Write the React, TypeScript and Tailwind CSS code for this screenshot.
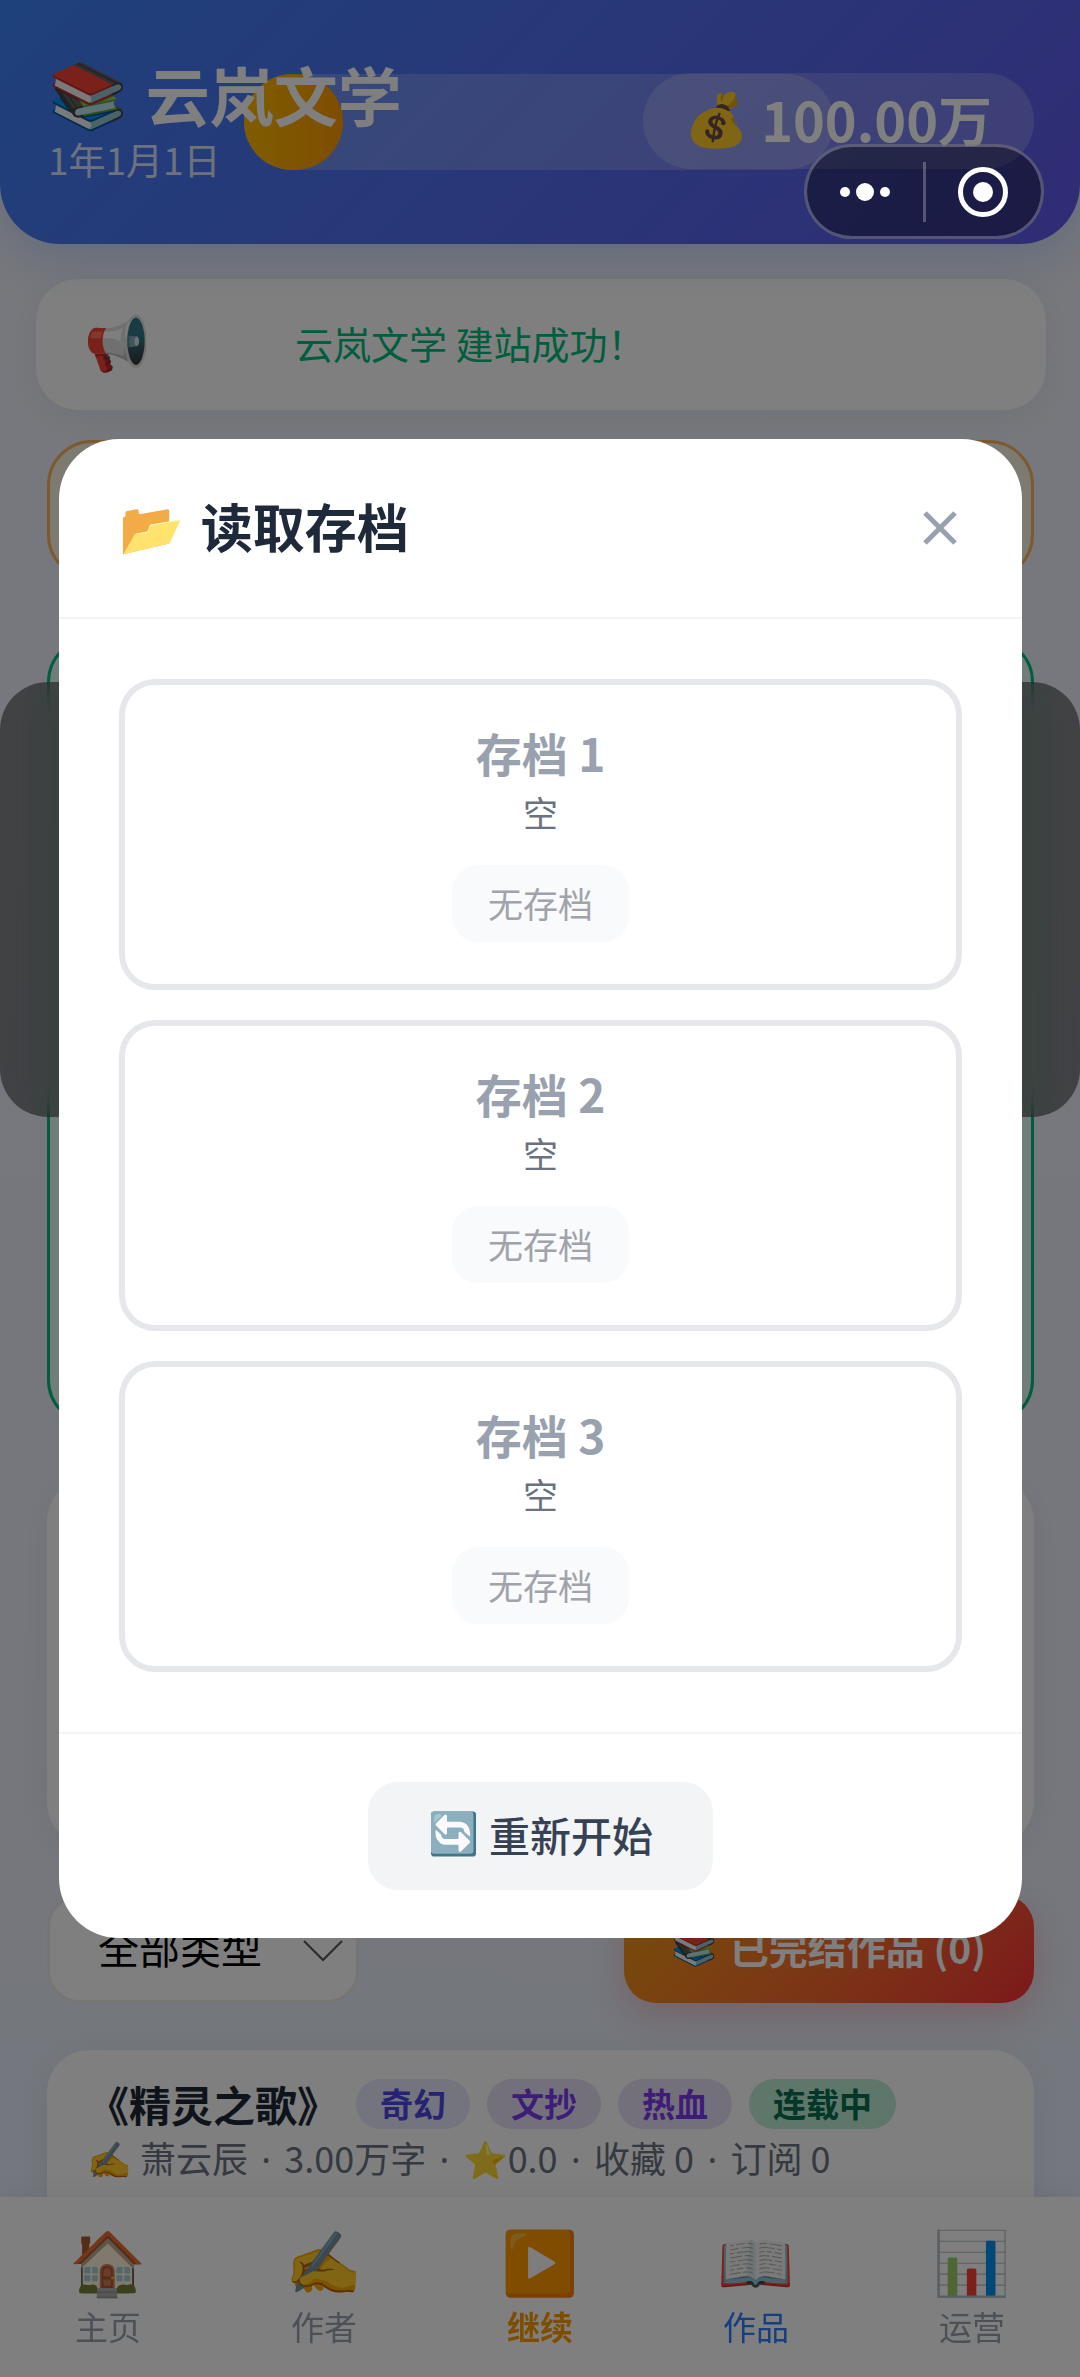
import { useState } from 'react'
import { X } from 'lucide-react'

interface SaveSlot {
  id: number
  summary: string | null
}

const SLOTS: SaveSlot[] = [
  { id: 1, summary: null },
  { id: 2, summary: null },
  { id: 3, summary: null },
]

const TAGS: { label: string; style: string }[] = [
  { label: '奇幻', style: 'bg-[#e6e9fc] text-[#4f46e5]' },
  { label: '文抄', style: 'bg-[#e6e0f8] text-[#7c3aed]' },
  { label: '热血', style: 'bg-[#e6e0f8] text-[#7c3aed]' },
  { label: '连载中', style: 'bg-[#bfecd5] text-[#066e4f]' },
]

const BOOK_STATS = ['萧云辰', '3.00万字', '⭐0.0', '收藏 0', '订阅 0']

const NAV_ITEMS: { icon: string; label: string; style: string }[] = [
  { icon: '🏠', label: '主页', style: 'text-gray-400' },
  { icon: '✍️', label: '作者', style: 'text-gray-400' },
  { icon: '▶️', label: '继续', style: 'font-bold text-amber-500' },
  { icon: '📖', label: '作品', style: 'text-blue-500' },
  { icon: '📊', label: '运营', style: 'text-gray-400' },
]

function Header() {
  return (
    <header className="relative flex items-start justify-between rounded-b-[60px] bg-linear-135 from-[#3b82f6] to-[#6058ea] pt-14 pr-[46px] pb-[60px] pl-12 text-white shadow-[0_12px_48px_rgba(59,130,246,0.25)]">
      <div className="absolute top-[74px] left-[244px] h-24 w-[590px] rounded-full bg-white/20">
        <div className="h-24 w-[99px] rounded-full bg-linear-to-r from-amber-400 to-amber-500" />
      </div>
      <div className="relative">
        <h1 className="flex items-center gap-[18px] text-[64px] leading-[74px] font-bold">
          <span className="pt-1 font-['Noto_Color_Emoji']">📚</span>
          <span className="pb-1">云岚文学</span>
        </h1>
        <p className="text-[37px] leading-[50px] opacity-80">1年1月1日</p>
      </div>
      <div className="relative mt-[17px] flex h-24 items-center gap-3 rounded-full bg-white/20 pr-[42px] pl-[41px] text-[54px] leading-[92px] font-bold">
        <span className="font-['Noto_Color_Emoji'] text-[52px]">💰</span>
        <span className="-mt-1">100.00万</span>
      </div>
    </header>
  )
}

function Capsule() {
  return (
    <div className="fixed top-36 right-9 z-50 flex h-[95px] w-60 items-center rounded-full border-[3px] border-white/25 bg-black/40">
      <button aria-label="更多" className="flex flex-1 items-center justify-center gap-1.5">
        <span className="size-2.5 rounded-full bg-white" />
        <span className="size-[18px] rounded-full bg-white" />
        <span className="size-2.5 rounded-full bg-white" />
      </button>
      <span className="h-[60px] w-[3px] bg-white/25" />
      <button aria-label="关闭小程序" className="flex flex-1 items-center justify-center">
        <span className="flex size-[50px] items-center justify-center rounded-full border-[5px] border-white">
          <span className="size-5 rounded-full bg-white" />
        </span>
      </button>
    </div>
  )
}

function FilterRow() {
  return (
    <div className="mt-12 flex items-center justify-between">
      <label className="relative">
        <select
          aria-label="作品类型"
          className="h-[108px] w-[312px] appearance-none rounded-[32px] border-[3px] border-[#efebe8] bg-white pb-1 pl-12 text-[41px] text-black"
        >
          <option>全部类型</option>
        </select>
        <svg viewBox="0 0 40 24" className="pointer-events-none absolute top-[45px] right-4 h-6 w-10" fill="none">
          <path d="M1 1 L20 20 L39 1" stroke="#555" strokeWidth="2" />
        </svg>
      </label>
      <button className="flex h-[108px] items-center gap-3 rounded-[32px] bg-linear-135 from-[#ee9a0b] to-red-500 px-12 pb-1 text-[39px] font-bold whitespace-nowrap text-white shadow-[0_12px_36px_rgba(239,68,68,0.25)]">
        <span className="font-['Noto_Color_Emoji'] text-[37px]">📚</span>
        已完结作品 (0)
      </button>
    </div>
  )
}

function BookCard() {
  return (
    <article className="mt-[47px] h-[400px] rounded-[42px] bg-white px-10 pt-[29px] shadow-[0_6px_36px_rgba(0,0,0,0.06)]">
      <div className="flex items-center gap-[17px]">
        <h2 className="text-[42px] leading-[48px] font-bold text-gray-800">《精灵之歌》</h2>
        {TAGS.map(tag => (
          <span
            key={tag.label}
            className={`rounded-full px-6 pb-0.5 text-[33px] leading-[48px] font-bold ${tag.style}`}
          >
            {tag.label}
          </span>
        ))}
      </div>
      <p className="text-[36px] leading-[56px] text-gray-500">
        <span className="font-['Noto_Color_Emoji']">✍️</span>{' '}
        {BOOK_STATS.map((stat, index) => (
          <span key={stat}>
            {index > 0 && <span className="mx-1 font-['Noto_Sans']"> · </span>}
            {stat}
          </span>
        ))}
      </p>
    </article>
  )
}

function BottomNav() {
  return (
    <nav className="fixed inset-x-0 bottom-0 grid h-[180px] grid-cols-5 bg-white pt-[29px] shadow-[0_-3px_24px_rgba(0,0,0,0.06)]">
      {NAV_ITEMS.map(item => (
        <button key={item.label} className={`flex flex-col items-center ${item.style}`}>
          <span className="font-['Noto_Color_Emoji'] text-[62px] leading-[76px] font-normal">{item.icon}</span>
          <span className="text-[33px] leading-[48px]">{item.label}</span>
        </button>
      ))}
    </nav>
  )
}

function LoadModal({ onClose }: { onClose: () => void }) {
  return (
    <div className="fixed inset-0 z-40 flex items-center justify-center bg-black/50 pr-[58px] pl-[59px]">
      <div role="dialog" aria-labelledby="load-title" className="w-full rounded-[60px] bg-white">
        <div className="flex items-center justify-between border-b-2 border-gray-100 py-[46px] pr-[52px] pl-[60px]">
          <h2 id="load-title" className="flex items-center gap-[17px] text-[52px] leading-[82px] font-bold text-gray-800">
            <span className="pt-1 font-['Noto_Color_Emoji']">📂</span>
            <span className="pb-1">读取存档</span>
          </h2>
          <button onClick={onClose} aria-label="关闭" className="text-gray-400">
            <X size={60} strokeWidth={2} strokeLinecap="butt" />
          </button>
        </div>

        <div className="flex flex-col gap-[30px] p-[60px]">
          {SLOTS.map(slot => (
            <div
              key={slot.id}
              className="flex flex-col items-center rounded-[36px] border-[6px] border-gray-200 pt-[33px] pb-[42px]"
            >
              <div className="text-[46px] leading-[68px] font-bold text-gray-400">存档 {slot.id}</div>
              <div className="text-[35px] leading-[52px] text-gray-500">{slot.summary ?? '空'}</div>
              <button
                disabled
                className="mt-[27px] rounded-[26px] bg-gray-50 px-9 pb-0.5 text-[35px] leading-[75px] text-[#a0a3a9]"
              >
                无存档
              </button>
            </div>
          ))}
        </div>

        <div className="flex justify-center border-t-2 border-gray-100 py-12">
          <button className="flex items-center gap-2.5 rounded-[30px] bg-gray-100 px-[60px] pb-1 text-[41px] leading-[104px] font-medium text-gray-700">
            <span className="font-['Noto_Color_Emoji']">🔄</span>
            重新开始
          </button>
        </div>
      </div>
    </div>
  )
}

export default function App() {
  const [showLoad, setShowLoad] = useState(true)

  return (
    <div className="relative h-screen overflow-hidden bg-linear-to-b from-[#f0f1fa] to-[#e8eefb] font-['Noto_Sans_CJK_SC',sans-serif]">
      <Header />

      {/* Announcement ticker */}
      <div className="mt-[35px] mr-[34px] ml-9 flex h-[131px] items-center gap-[145px] rounded-[42px] bg-white px-12 shadow-[0_6px_36px_rgba(0,0,0,0.06)]">
        <span className="font-['Noto_Color_Emoji'] text-[53px]">📢</span>
        <span className="pb-1 text-[38px] text-emerald-500">云岚文学 建站成功！</span>
      </div>

      <main className="mt-[30px] mr-[46px] ml-[47px]">
        <section className="h-[140px] rounded-[45px] border-[3px] border-[#f9b25f] bg-[#fbf4e2]" />
        <section className="mt-[57px] h-[788px] rounded-[45px] border-[3px] border-emerald-500 bg-[#e3faf0]" />
        <section className="mt-[52px] h-[370px] rounded-[45px] bg-white shadow-[0_6px_36px_rgba(0,0,0,0.06)]" />
        <FilterRow />
        <BookCard />
      </main>

      <BottomNav />

      {/* Toast backdrop behind the dialog */}
      <div className="fixed inset-x-0 top-[682px] h-[435px] rounded-[48px] bg-black/45 backdrop-blur-lg" />

      {showLoad && <LoadModal onClose={() => setShowLoad(false)} />}
      <Capsule />
    </div>
  )
}
